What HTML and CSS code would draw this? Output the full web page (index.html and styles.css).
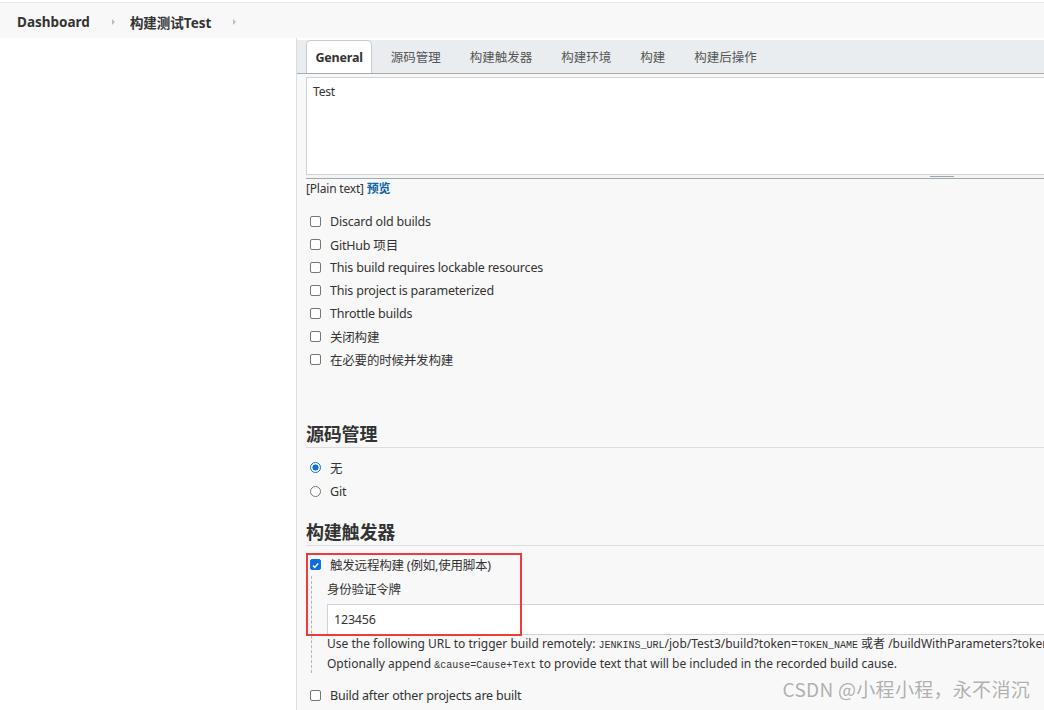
FILE: index.html
```html
<!DOCTYPE html>
<html lang="zh">
<head>
<meta charset="utf-8">
<title>构建测试Test Config</title>
<link rel="stylesheet" href="styles.css">
</head>
<body>
<div class="crumbs">
  <span class="crumb">Dashboard</span>
  <span class="arrow"></span>
  <span class="crumb">构建测试Test</span>
  <span class="arrow"></span>
</div>
<div class="main">
  <div class="side"></div>
  <div class="content">
    <div class="tabbar">
      <span class="tab active">General</span>
      <span class="tab">源码管理</span>
      <span class="tab">构建触发器</span>
      <span class="tab">构建环境</span>
      <span class="tab">构建</span>
      <span class="tab">构建后操作</span>
    </div>
    <div class="section">
      <div class="textarea">Test</div>
      <div class="handle"><span class="grip"></span></div>
      <div class="plain">[Plain text] <a class="link">预览</a></div>
      <div class="checks">
        <div class="row"><span class="cb"></span><span>Discard old builds</span></div>
        <div class="row"><span class="cb"></span><span>GitHub 项目</span></div>
        <div class="row"><span class="cb"></span><span>This build requires lockable resources</span></div>
        <div class="row"><span class="cb"></span><span>This project is parameterized</span></div>
        <div class="row"><span class="cb"></span><span>Throttle builds</span></div>
        <div class="row"><span class="cb"></span><span>关闭构建</span></div>
        <div class="row"><span class="cb"></span><span>在必要的时候并发构建</span></div>
      </div>
      <h2 class="heading first">源码管理</h2>
      <div class="radios">
        <div class="row rrow"><span class="radio on"></span><span>无</span></div>
        <div class="row rrow"><span class="radio"></span><span>Git</span></div>
      </div>
      <h2 class="heading second">构建触发器</h2>
      <div class="trigger">
        <div class="row"><span class="cb checked"><svg viewBox="0 0 11 11" width="11" height="11"><path d="M2.3 5.6 L4.5 7.8 L8.8 3.2" fill="none" stroke="#fff" stroke-width="1.8"/></svg></span><span>触发远程构建 (例如,使用脚本)</span></div>
        <div class="nested">
          <div class="field-label">身份验证令牌</div>
          <div class="input">123456</div>
          <div class="help help-first">Use the following URL to trigger build remotely: <code>JENKINS_URL</code>/job/Test3/build?token=<code>TOKEN_NAME</code> 或者 /buildWithParameters?token=<code>TOKEN_NAME</code></div>
          <div class="help">Optionally append <code>&amp;cause=Cause+Text</code> to provide text that will be included in the recorded build cause.</div>
        </div>
        <div class="redbox"></div>
      </div>
      <div class="row after"><span class="cb"></span><span>Build after other projects are built</span></div>
    </div>
  </div>
</div>
<div class="watermark">CSDN @小程小程，永不消沉</div>
</body>
</html>
```

FILE: styles.css
```css
html, body {
  margin: 0;
  padding: 0;
  width: 1044px;
  height: 710px;
  overflow: hidden;
  background: #ffffff;
  font-family: "Noto Sans", "Noto Sans CJK SC", sans-serif;
  color: #333;
  font-size: 12.5px;
  letter-spacing: -0.2px;
  position: relative;
}

.crumbs {
  margin-top: 2px;
  border-top: 1px solid #e6e6e6;
  height: 36px;
  background: #f8f8f8;
  display: flex;
  align-items: center;
  padding: 2px 0 0 17px;
  box-sizing: border-box;
}
.crumb {
  font-weight: 700;
  font-size: 13.5px;
  letter-spacing: 0;
  color: #333;
}
.arrow {
  width: 0;
  height: 0;
  border-left: 3px solid #bbb;
  border-top: 3px solid transparent;
  border-bottom: 3px solid transparent;
  margin: 0 15px 0 22px;
}

.main {
  display: flex;
  height: 672px;
}
.side {
  width: 296px;
  flex: none;
  background: #fff;
}
.content {
  flex: 1;
  min-width: 0;
  overflow: hidden;
  border-left: 1px solid #dcdcdc;
  background: #f8f8f8;
  padding-top: 2px;
  box-sizing: border-box;
  background-clip: content-box;
}

.tabbar {
  height: 34px;
  background: #e9edf0;
  border-bottom: 1px solid #a3acb1;
  display: flex;
  align-items: flex-end;
  padding-left: 9px;
  box-sizing: border-box;
}
.tab {
  height: 33px;
  line-height: 32px;
  padding: 2px 14.5px 0;
  color: #555;
  font-size: 12.5px;
  letter-spacing: 0;
  box-sizing: border-box;
}
.tab.active {
  background: #fff;
  border: 1px solid #c5cbcf;
  border-bottom: none;
  border-radius: 5px 5px 0 0;
  padding: 2px 8.5px 0;
  margin-right: 4px;
  line-height: 30px;
  font-weight: 700;
  letter-spacing: -0.2px;
  color: #333;
}

.section {
  padding-left: 9px;
}

.textarea {
  margin-top: 3px;
  width: 1272px;
  height: 98px;
  background: #fff;
  border: 1px solid #cfd3d5;
  box-sizing: border-box;
  padding: 5px 6px;
  font-size: 12px;
  color: #333;
}
.handle {
  width: 1272px;
  height: 4px;
  border-bottom: 1px solid #a2a9ad;
  box-sizing: border-box;
  display: flex;
  justify-content: center;
  background: #f3f4f5;
}
.grip {
  display: block;
  width: 24px;
  height: 1px;
  margin-top: 1px;
  background: #9aa3a7;
}

.plain {
  height: 18px;
  line-height: 18px;
  padding-top: 1px;
  font-size: 12px;
  color: #333;
}
.link {
  color: #1366a6;
  font-weight: 600;
}

.checks {
  margin-top: 12px;
}
.row {
  display: flex;
  align-items: center;
  height: 23px;
  padding-left: 4px;
  gap: 9px;
  font-size: 12.5px;
  color: #333;
}
.cb {
  width: 11px;
  height: 11px;
  border: 1px solid #767676;
  border-radius: 2px;
  box-sizing: border-box;
  background: #fff;
  flex: none;
  display: flex;
}
.cb.checked {
  background: #0b6fe0;
  border-color: #0b6fe0;
}
.radio {
  width: 11px;
  height: 11px;
  border: 1px solid #767676;
  border-radius: 50%;
  box-sizing: border-box;
  background: #fff;
  flex: none;
}
.radio.on {
  border: 1px solid #0b6fe0;
  background: radial-gradient(circle, #0b6fe0 0 2.8px, #fff 3.3px);
}
.rrow {
  height: 24px;
}

.heading {
  margin: 0;
  font-size: 18px;
  font-weight: 700;
  line-height: 26px;
  color: #333;
  border-bottom: 1px solid #dcdcdc;
  width: 1272px;
}
.heading.first {
  margin-top: 50px;
}
.radios {
  margin-top: 7px;
}
.heading.second {
  margin-top: 16px;
}

.trigger {
  position: relative;
  margin-top: 7px;
}
.nested {
  margin-left: 5px;
  border-left: 1px dashed #b5b5b5;
  padding-left: 15px;
}
.field-label {
  height: 23px;
  line-height: 23px;
  padding-top: 2px;
  box-sizing: content-box;
  font-size: 12.5px;
}
.input {
  margin-top: 3px;
  width: 1272px;
  height: 31px;
  line-height: 29px;
  background: #fff;
  border: 1px solid #cfd3d5;
  box-sizing: border-box;
  padding-left: 6px;
  font-size: 12.5px;
}
.help {
  height: 19px;
  line-height: 19px;
  font-size: 12px;
  letter-spacing: 0;
  white-space: nowrap;
  color: #333;
}
.help-first {
  line-height: 17px;
}
code {
  font-family: "Liberation Mono", monospace;
  font-size: 10px;
  line-height: 1;
  letter-spacing: 0;
}
.redbox {
  position: absolute;
  left: 0;
  top: 0;
  width: 216px;
  height: 83px;
  border: 2px solid #ee3b3b;
  box-sizing: border-box;
}
.after {
  margin-top: 11px;
}

.watermark {
  position: absolute;
  right: 14px;
  bottom: 8px;
  font-family: "Noto Sans CJK SC", "Noto Sans", sans-serif;
  font-size: 19px;
  color: #b0b0b0;
  text-shadow: 0 0 2px #fff;
  letter-spacing: 0.3px;
}
```
